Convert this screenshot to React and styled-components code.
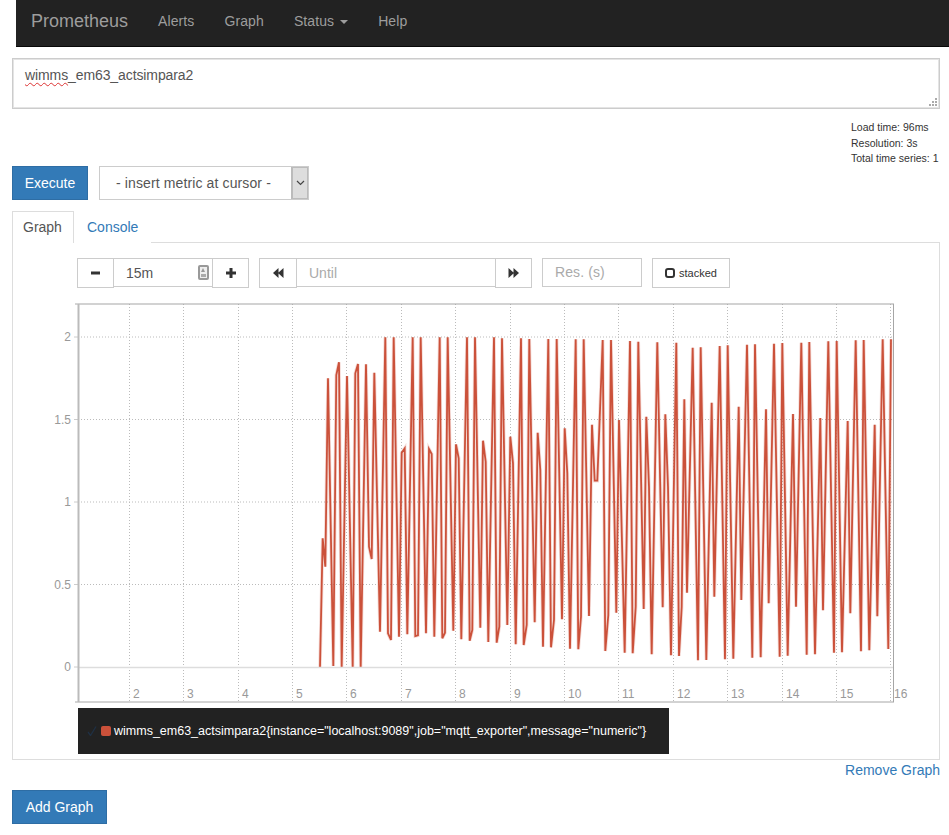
import React from 'react';
import styled, {createGlobalStyle} from 'styled-components';

const GlobalStyle = createGlobalStyle`
  html, body {
    margin: 0;
    padding: 0;
    background: white;
    font-family: "Liberation Sans", Arial, sans-serif;
    font-size: 14px;
    color: #333;
  }
  * {
    box-sizing: border-box;
  }
`

// sampled from the plot, in page pixels relative to the plot's top left corner (78, 304)
const toPoints = (raw, ox) => raw.map(([x, y]) => [ox + x / 3 - 78, 320 + y / 3 - 304]);

const SERIES_LEFT = toPoints([
    [60, 1040], [68, 655], [76, 740], [84, 175], [100, 1038], [109, 165], [117, 127], [125, 1040],
    [141, 168], [158, 1040], [166, 160], [174, 132], [182, 1040], [198, 133], [207, 680], [215, 717],
    [223, 158], [240, 935], [256, 52], [264, 940], [273, 960], [281, 52], [297, 950], [305, 398],
    [314, 385], [322, 943], [338, 52], [346, 948], [354, 946], [362, 52], [378, 940], [387, 387],
    [395, 402], [403, 950], [419, 52], [427, 955], [435, 938], [443, 52], [460, 932], [468, 373],
    [476, 415], [484, 958], [501, 52], [509, 962], [517, 930], [525, 52], [541, 923], [549, 362],
    [557, 425], [565, 966], [582, 52], [590, 968], [598, 920], [606, 55], [622, 915], [631, 350],
    [639, 430], [647, 973], [663, 55], [671, 975], [680, 915], [688, 57], [704, 907], [713, 338],
    [721, 450], [729, 980], [745, 57], [753, 982], [762, 900], [770, 57], [786, 898], [794, 325],
    [802, 460], [810, 986], [827, 58], [835, 988], [843, 890], [851, 58], [867, 888], [876, 314],
    [884, 482], [892, 482], [908, 60], [916, 993], [925, 885], [933, 60], [949, 878], [957, 300],
], 300);

const SERIES_RIGHT = toPoints([
    [14, 998], [30, 63], [38, 1000], [47, 860], [55, 65], [71, 867], [79, 290], [87, 500], [95, 1003],
    [112, 67], [128, 862], [136, 283], [144, 500], [153, 1006], [169, 68], [177, 1008], [185, 860],
    [193, 238], [201, 818], [218, 83], [234, 1021], [242, 82], [259, 1020], [275, 248], [283, 830],
    [299, 78], [315, 1018], [323, 76], [340, 1016], [356, 260], [364, 840], [381, 74], [397, 1013],
    [405, 73], [422, 1012], [438, 268], [446, 850], [462, 71], [479, 1010], [487, 69], [503, 1007],
    [519, 282], [528, 860], [544, 68], [560, 1004], [568, 66], [585, 1003], [601, 294], [609, 871],
    [625, 64], [642, 998], [650, 63], [666, 997], [683, 303], [691, 880], [707, 61], [723, 994],
    [731, 60], [748, 991], [764, 314], [772, 889], [788, 58], [805, 987], [813, 58],
], 620);

const SERIES = [...SERIES_LEFT, ...SERIES_RIGHT].map(([x, y]) => `${x.toFixed(1)},${y.toFixed(1)}`).join(' ');

const PLOT_W = 815;
const PLOT_H = 398;
const Y_TICKS = [['2', 33], ['1.5', 115.5], ['1', 198], ['0.5', 280.5], ['0', 363]];
const X_TICKS = [
    ['2', 52], ['3', 106], ['4', 161], ['5', 215], ['6', 269], ['7', 324], ['8', 378], ['9', 433],
    ['10', 487], ['11', 541], ['12', 596], ['13', 650], ['14', 705], ['15', 759], ['16', 813],
];

const Chart = () => (
    <ChartSvg viewBox={`-40 -2 ${PLOT_W + 66} ${PLOT_H + 4}`}>
        {Y_TICKS.filter(([label]) => label !== '0').map(([label, y]) => (
            <line key={label} x1="0" x2={PLOT_W} y1={y} y2={y} stroke="#bbb" strokeDasharray="1 2"/>
        ))}
        {X_TICKS.map(([label, x]) => (
            <line key={label} x1={x - 0.5} x2={x - 0.5} y1="0" y2={PLOT_H} stroke="#bbb" strokeDasharray="1 2"/>
        ))}
        <line x1="0" x2={PLOT_W} y1="363.5" y2="363.5" stroke="#ddd" strokeWidth="1.5"/>
        <path d="M-3 0H0M-3 398H0" stroke="#aaa" fill="none"/>
        {Y_TICKS.map(([label, y]) => (
            <line key={label} x1="-4" x2="0" y1={y} y2={y} stroke="#ccc"/>
        ))}
        <rect x="0.5" y="0" width={PLOT_W} height={PLOT_H} fill="none" stroke="#a6a6a6"/>
        <line x1="0.5" x2="0.5" y1="0" y2={PLOT_H} stroke="#bbb" strokeWidth="2"/>
        <polyline points={SERIES} fill="none" stroke="#cb513a" strokeOpacity="0.2" strokeWidth="3.5" strokeLinejoin="miter"/>
        <polyline points={SERIES} fill="none" stroke="#cb513a" strokeWidth="1.8" strokeLinejoin="miter"/>
        {Y_TICKS.map(([label, y]) => (
            <AxisLabel key={label} x="-7" y={y + 4} textAnchor="end">{label}</AxisLabel>
        ))}
        {X_TICKS.map(([label, x]) => (
            <AxisLabel key={label} x={x + 3} y="394">{label}</AxisLabel>
        ))}
    </ChartSvg>
);

const DoubleArrow = ({right}) => (
    <svg width="12" height="12" viewBox="0 0 12 12" style={right ? {transform: 'scaleX(-1)'} : undefined}>
        <path d="M6.500 1V11L1 6ZM11.500 1V11L6 6Z" fill="#333"/>
    </svg>
);

export default function App() {
    return (
        <Page>
            <GlobalStyle/>
            <Navbar>
                <Brand>Prometheus</Brand>
                <NavLink>Alerts</NavLink>
                <NavLink>Graph</NavLink>
                <NavLink>Status <Caret/></NavLink>
                <NavLink>Help</NavLink>
            </Navbar>
            <Content>
                <Expression>
                    <ExpressionText><Misspelled>wimms</Misspelled>_em63_actsimpara2</ExpressionText>
                    <Grip width="10" height="10" viewBox="0 0 10 10">
                        <path d="M7 1h2v2H7zM4 4h2v2H4zM7 4h2v2H7zM1 7h2v2H1zM4 7h2v2H4zM7 7h2v2H7z" fill="#aaa"/>
                    </Grip>
                </Expression>
                <Stats>
                    <StatLine>Load time: 96ms</StatLine>
                    <StatLine>Resolution: 3s</StatLine>
                    <StatLine>Total time series: 1</StatLine>
                </Stats>
                <ExecuteRow>
                    <PrimaryButton $width={76}>Execute</PrimaryButton>
                    <MetricSelect>
                        <MetricLabel>- insert metric at cursor -</MetricLabel>
                        <SelectArrow>
                            <svg width="9" height="6" viewBox="0 0 9 6">
                                <path d="M1 1L4.5 4.5L8 1" fill="none" stroke="#444" strokeWidth="1.2"/>
                            </svg>
                        </SelectArrow>
                    </MetricSelect>
                </ExecuteRow>
                <Tabs>
                    <Tab $active>Graph</Tab>
                    <Tab>Console</Tab>
                </Tabs>
                <Panel>
                    <Controls>
                        <InputGroup>
                            <SquareButton $width={37}>
                                <svg width="12" height="12" viewBox="0 0 12 12"><path d="M1 4.500h9v3H1z" fill="#333"/></svg>
                            </SquareButton>
                            <GroupInput $width={98} $dark>
                                15m
                                <Spinner/>
                            </GroupInput>
                            <SquareButton $width={37}>
                                <svg width="12" height="12" viewBox="0 0 12 12"><path d="M4.500 1h3v3.500H11v3H7.500V11h-3V7.500H1v-3h3.500z" fill="#333"/></svg>
                            </SquareButton>
                        </InputGroup>
                        <InputGroup>
                            <SquareButton $width={38}><DoubleArrow/></SquareButton>
                            <GroupInput $width={198}>Until</GroupInput>
                            <SquareButton $width={37}><DoubleArrow right/></SquareButton>
                        </InputGroup>
                        <ResInput>Res. (s)</ResInput>
                        <StackedButton><StackedBox/>stacked</StackedButton>
                    </Controls>
                    <ChartWrap>
                        <Chart/>
                    </ChartWrap>
                    <Legend>
                        <LegendCheck width="10" height="10" viewBox="0 0 10 10">
                            <path d="M1 6L3.500 9.500L9 0.500" fill="none" stroke="#1f3044" strokeWidth="1.300"/>
                        </LegendCheck>
                        <LegendSwatch/>
                        <span>wimms_em63_actsimpara2{'{'}instance="localhost:9089",job="mqtt_exporter",message="numeric"{'}'}</span>
                    </Legend>
                </Panel>
                <RemoveRow><RemoveLink>Remove Graph</RemoveLink></RemoveRow>
                <PrimaryButton $width={95}>Add Graph</PrimaryButton>
            </Content>
        </Page>
    );
}

const Page = styled.div`
  width: 949px;
  height: 835px;
  overflow: hidden;
`

const Navbar = styled.nav`
  margin-left: 16px;
  height: 47px;
  background-color: #222;
  border-bottom: 1px solid #080808;
  display: flex;
  align-items: center;
  padding: 0 0 4px 15px;
`

const Brand = styled.a`
  font-size: 18px;
  color: #9d9d9d;
  margin-right: 15px;
`

const NavLink = styled.a`
  font-size: 14px;
  letter-spacing: 0.1px;
  color: #9d9d9d;
  padding: 0 15px;
`

const Caret = styled.span`
  display: inline-block;
  width: 0;
  height: 0;
  margin-left: 2px;
  vertical-align: middle;
  border-top: 4px solid #9d9d9d;
  border-left: 4px solid transparent;
  border-right: 4px solid transparent;
`

const Content = styled.main`
  padding: 11px 9px 0 12px;
`

const Expression = styled.div`
  position: relative;
  height: 51px;
  border: 1px solid #ccc;
  outline: 1px solid #e4e4e4;
  outline-offset: -2px;
  padding: 8px 12px;
  font-size: 14px;
  line-height: 17px;
  letter-spacing: -0.1px;
  color: #555;
`

const ExpressionText = styled.div`
  margin-top: 0;
`

const Misspelled = styled.span`
  text-decoration: underline wavy #d33;
  text-decoration-thickness: 1px;
  text-underline-offset: 2px;
`

const Grip = styled.svg`
  position: absolute;
  right: 1px;
  bottom: 1px;
`

const Stats = styled.div`
  margin-top: 11px;
  height: 46px;
  display: flex;
  flex-direction: column;
  align-items: flex-start;
  padding-left: 839px;
`

const StatLine = styled.div`
  font-size: 10.500px;
  line-height: 15.500px;
  white-space: nowrap;
  color: #333;
`

const ExecuteRow = styled.div`
  display: flex;
  gap: 11px;
`

const PrimaryButton = styled.button`
  width: ${p => p.$width}px;
  height: 34px;
  padding: 0;
  font: 14px "Liberation Sans", Arial, sans-serif;
  color: white;
  background-color: #337ab7;
  border: 1px solid #2e6da4;
`

const MetricSelect = styled.div`
  width: 210px;
  height: 34px;
  display: flex;
  border: 1px solid #ccc;
  color: #555;
`

const MetricLabel = styled.div`
  flex: 1;
  padding-left: 16px;
  line-height: 32px;
  font-size: 14px;
  letter-spacing: 0.12px;
`

const SelectArrow = styled.div`
  width: 17px;
  background-color: #ddd;
  border: 1px solid #bbb;
  border-left-width: 2px;
  display: flex;
  align-items: center;
  justify-content: center;
`

const Tabs = styled.div`
  margin-top: 11px;
  height: 32px;
  display: flex;
`

const Tab = styled.div`
  width: ${p => p.$active ? '62px' : 'auto'};
  height: 32px;
  padding: 0 ${p => p.$active ? 10 : 12}px;
  line-height: 31px;
  font-size: 14px;
  color: ${p => p.$active ? '#555' : '#337ab7'};
  background-color: white;
  position: relative;
  z-index: 1;
  border: 1px solid ${p => p.$active ? '#ddd' : 'transparent'};
  border-bottom: 0;
`

const Panel = styled.section`
  height: 518px;
  margin-top: -1px;
  border: 1px solid #ddd;
  padding: 15px 0 0 64px;
`

const Controls = styled.div`
  height: 30px;
  display: flex;
  gap: 10px;
`

const InputGroup = styled.div`
  display: flex;
`

const SquareButton = styled.div`
  width: ${p => p.$width}px;
  height: 30px;
  border: 1px solid #ccc;
  display: flex;
  align-items: center;
  justify-content: center;
`

const GroupInput = styled.div`
  position: relative;
  width: ${p => p.$width}px;
  height: 29px;
  padding-left: 12px;
  font-size: 14px;
  line-height: 28px;
  color: ${p => p.$dark ? '#555' : '#aaa'};
  border-top: 1px solid #ccc;
  border-bottom: 1px solid #ccc;
`

const Spinner = styled.span`
  position: absolute;
  right: 3px;
  top: 6px;
  width: 11px;
  height: 15px;
  background: #eee;
  border: 2px solid #999;
  border-radius: 2px;
  &::before {
    content: '';
    position: absolute;
    left: 1px;
    top: 1px;
    border-left: 2px solid transparent;
    border-right: 2px solid transparent;
    border-bottom: 4px solid #999;
  }
  &::after {
    content: '';
    position: absolute;
    left: 1px;
    bottom: 1px;
    width: 5px;
    height: 3px;
    background: #aaa;
  }
`

const ResInput = styled.div`
  width: 100px;
  height: 29px;
  padding-left: 12px;
  border: 1px solid #ccc;
  font-size: 14px;
  letter-spacing: 0.1px;
  line-height: 27px;
  color: #aaa;
`

const StackedButton = styled.div`
  width: 78px;
  height: 30px;
  border: 1px solid #ccc;
  display: flex;
  align-items: center;
  padding-left: 12px;
  gap: 4px;
  font-size: 11px;
  color: #333;
`

const StackedBox = styled.span`
  width: 10px;
  height: 10px;
  border: 2px solid #333;
  border-radius: 3px;
`

const ChartWrap = styled.div`
  margin: 14px 0 0 -39px;
`

const ChartSvg = styled.svg`
  display: block;
  width: 881px;
  height: 402px;
`

const AxisLabel = styled.text`
  font-family: "Liberation Sans", Arial, sans-serif;
  font-size: 12px;
  fill: #999;
`

const Legend = styled.div`
  width: 591px;
  height: 46px;
  margin: 4px 0 0 1px;
  background-color: #222;
  color: white;
  font-size: 12.500px;
  display: flex;
  align-items: center;
  padding-left: 9px;
`

const LegendCheck = styled.svg`
  margin-right: 4px;
`

const LegendSwatch = styled.span`
  width: 10px;
  height: 10px;
  border-radius: 2px;
  background-color: #cb513a;
  margin-right: 3px;
`

const RemoveRow = styled.div`
  height: 30px;
  display: flex;
  justify-content: flex-end;
  padding-top: 2px;
`

const RemoveLink = styled.a`
  font-size: 14px;
  line-height: 17px;
  color: #337ab7;
`
